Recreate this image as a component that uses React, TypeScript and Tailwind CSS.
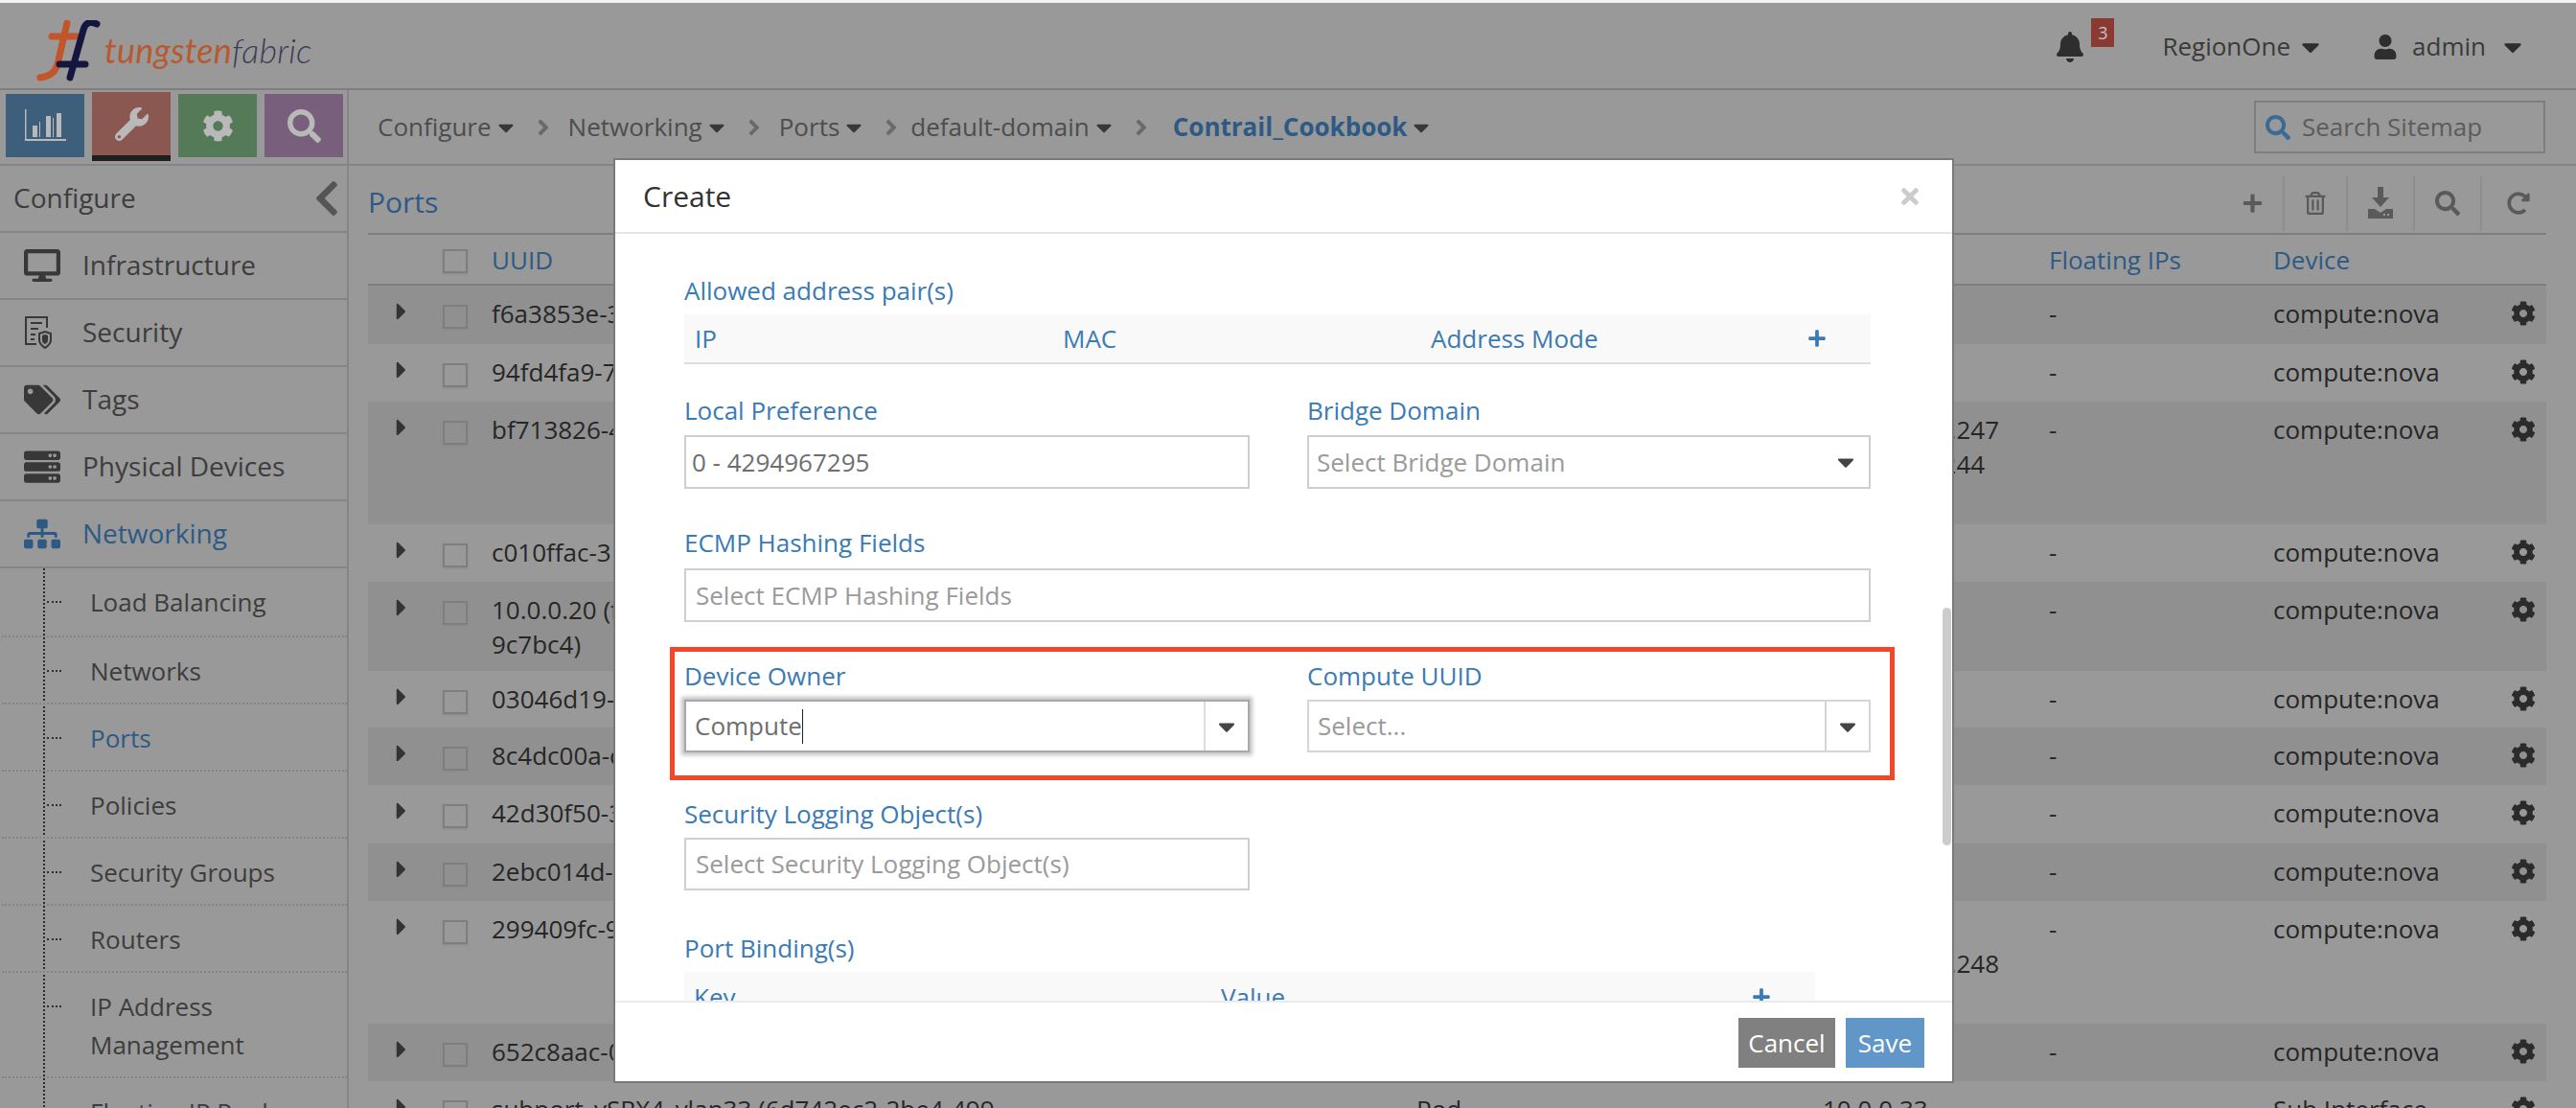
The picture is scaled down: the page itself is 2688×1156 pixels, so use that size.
import React from 'react';
import {
  FaAngleRight,
  FaBell,
  FaCaretDown,
  FaCaretRight,
  FaChevronLeft,
  FaCog,
  FaDesktop,
  FaPlus,
  FaRedoAlt,
  FaRegTrashAlt,
  FaSearch,
  FaServer,
  FaSitemap,
  FaTags,
  FaTimes,
  FaUser,
  FaWrench,
} from 'react-icons/fa';

const sans = "font-['Open_Sans',sans-serif]";

const rows = [
  { h: 'h-[61px]', id: ['f6a3853e-3c1a-4b2e-9d10-7e5f11a2'], ip: [''], dev: 'compute:nova' },
  { h: 'h-[60px]', id: ['94fd4fa9-7b20-4e31-8cc4-19ad02f7'], ip: [''], dev: 'compute:nova' },
  { h: 'h-[128px]', id: ['bf713826-4e0d-4a77-b1f2-3c90d6e1'], ip: ['192.168.10.247', '172.16.10.244'], dev: 'compute:nova' },
  { h: 'h-[60px]', id: ['c010ffac-31d4-48ab-a05e-62b7c0d3'], ip: [''], dev: 'compute:nova' },
  { h: 'h-[93px]', id: ['10.0.0.20 (f2a81c0e-5d3b-4f60-a7e1-', '9c7bc4)'], ip: [''], dev: 'compute:nova' },
  { h: 'h-[59px]', id: ['03046d19-2a6f-4c18-93de-50e1b7a4'], ip: [''], dev: 'compute:nova' },
  { h: 'h-[60px]', id: ['8c4dc00a-c71e-4d02-86fb-a13e9072'], ip: [''], dev: 'compute:nova' },
  { h: 'h-[61px]', id: ['42d30f50-3b8c-49e7-a214-d7f06c15'], ip: [''], dev: 'compute:nova' },
  { h: 'h-[60px]', id: ['2ebc014d-4f92-4b6a-8e37-01c5da98'], ip: [''], dev: 'compute:nova' },
  { h: 'h-[128px]', id: ['299409fc-9d15-4ea3-b7c0-84f2e613'], ip: ['', '192.168.20.248'], dev: 'compute:nova' },
  { h: 'h-[60px]', id: ['652c8aac-0e47-4c39-91ab-7d26f3b0'], ip: [''], dev: 'compute:nova' },
  { h: 'h-[60px]', id: ['subport_vSRX4_vlan33 (6d742ec2-2be4-499'], name: 'Pod', ip: ['10.0.0.33'], dev: 'Sub Interface' },
];

const subItems = [
  { label: ['Load Balancing'], h: 'h-[72px]' },
  { label: ['Networks'], h: 'h-[70px]' },
  { label: ['Ports'], h: 'h-[70px]', active: true },
  { label: ['Policies'], h: 'h-[70px]' },
  { label: ['Security Groups'], h: 'h-[70px]' },
  { label: ['Routers'], h: 'h-[70px]' },
  { label: ['IP Address', 'Management'], h: 'h-[110px]' },
  { label: ['Floating IP Pools'], h: 'h-[70px]' },
];

function ChartIcon() {
  return (
    <svg width="43" height="34" viewBox="0 0 43 34" fill="#b9b9b9">
      <path d="M0 0h1.500v31H43v2H0z" />
      <path d="M8 17h5v12H8zM15 13h1v16h-1zM22 7h5v22h-5zM29 9h1v20h-1zM33 4h5v25h-5z" />
    </svg>
  );
}

function SecurityIcon() {
  return (
    <svg width="30" height="36" viewBox="0 0 30 36" fill="none" stroke="#383838" strokeWidth="2">
      <path d="M24 13V2H2v28h11" />
      <path d="M7 8h12M7 14h8M7 20h5M7 25h4" />
      <path d="M16 19l6-2 6 2v7c0 4-3 6-6 8-3-2-6-4-6-8z" />
      <path d="M19 21l3-1 3 1v5c0 2-1.500 3-3 4-1.500-1-3-2-3-4z" fill="#383838" stroke="none" />
    </svg>
  );
}

function DownloadIcon() {
  return (
    <svg width="26" height="34" viewBox="0 0 26 34" fill="#5a5a5a">
      <path d="M10 0h6v11h6l-9 10-9-10h6z" />
      <path d="M0 23h7l6 4 6-4h7v10H0z" />
      <rect x="20" y="28" width="2" height="2" fill="#999" />
      <rect x="16" y="28" width="2" height="2" fill="#999" />
    </svg>
  );
}

function Logo() {
  return (
    <div className="flex items-center pl-[38px] pt-[10px]">
      <svg width="68" height="64" viewBox="38 12 68 64" fill="none" strokeLinecap="round">
        <path d="M70 15 L60 58 Q57 70 42 72" stroke="#c2552a" strokeWidth="7" />
        <path d="M54 29 H80" stroke="#c2552a" strokeWidth="7" />
        <path d="M101 16 Q90 11 87 22 L73 72" stroke="#15163f" strokeWidth="7" />
        <path d="M62 58 H89" stroke="#15163f" strokeWidth="7" />
      </svg>
      <span className="ml-[3px] -mt-[2px] font-['Lato',sans-serif] italic text-[36px] leading-none tracking-[0.2px]">
        <span className="text-[#b8592f]">tungsten</span>
        <span className="text-[#3a3e55] font-light">fabric</span>
      </span>
    </div>
  );
}

function Crumb({ label, strong, last, className }: { label: string; strong?: boolean; last?: boolean; className?: string }) {
  return (
    <div className={`flex items-center ${className ?? ''}`}>
      <span className={strong ? 'font-bold text-[#2d5a85]' : 'text-[#4d4d4d]'}>{label}</span>
      <FaCaretDown className="ml-[2px] text-[#383838]" size={26} />
      {!last && <FaAngleRight className="mx-[13px] text-[#6a6a6a]" size={26} />}
    </div>
  );
}

function Tab({ color, active, children }: { color: string; active?: boolean; children: React.ReactNode }) {
  return (
    <div className={active ? 'flex flex-col w-[82px] -mt-[2px]' : 'flex flex-col w-[82px]'}>
      <div className={`${color} h-[66px] flex items-center justify-center`}>{children}</div>
      {active && <div className="h-[6px] bg-[#1e1e1e]" />}
    </div>
  );
}

function SideItem({ icon, label, active }: { icon: React.ReactNode; label: string; active?: boolean }) {
  return (
    <div className="h-[70px] border-b-2 border-[#858585] flex items-center">
      <div className="w-[86px] pl-[25px] flex items-center">{icon}</div>
      <span className={`-mt-[2px] ${active ? 'text-[#2d5a85]' : 'text-[#3d3d3d]'}`}>{label}</span>
    </div>
  );
}

function Checkbox() {
  return <div className="w-[26px] h-[25px] border-2 border-[#7e7e7e] shadow-[0_1px_2px_#8a8a8a]" />;
}

function FieldLabel({ children }: { children: React.ReactNode }) {
  return <div className="text-[26px] leading-[36px] text-[#3a7ab5]">{children}</div>;
}

function TextBox({ text, dark, h }: { text: string; dark?: boolean; h: string }) {
  return (
    <div className={`${h} border-2 border-[#cfcfcf] flex items-center text-[26px] ${dark ? 'pl-[6px] text-[#6e6e6e]' : 'pl-[10px] text-[#9a9a9a]'}`}>
      {text}
    </div>
  );
}

export default function App() {
  return (
    <div className={`${sans} relative w-[2688px] h-[1156px] overflow-hidden bg-[#999999] border-t-[3px] border-[#f2f2f2]`}>
      {/* Top bar */}
      <div className="h-[91px] border-b-2 border-[#7e7e7e] flex items-center justify-between">
        <Logo />
        <div className="flex items-center mt-[2px] text-[26px] text-[#3a3a3a] pr-[51px]">
          <div className="relative mr-[80px]">
            <FaBell size={32} className="text-[#2e2e2e]" />
            <div className="absolute -top-[14px] left-[38px] w-[24px] h-[30px] bg-[#8a3a33] text-[#c4c4c4] text-[18px] leading-[30px] text-center">3</div>
          </div>
          <span>RegionOne</span>
          <FaCaretDown size={30} className="ml-[6px] mr-[50px] text-[#2e2e2e]" />
          <FaUser size={26} className="mr-[15px] text-[#2e2e2e]" />
          <span>admin</span>
          <FaCaretDown size={30} className="ml-[13px] text-[#2e2e2e]" />
        </div>
      </div>

      {/* Menu tabs and breadcrumb */}
      <div className="h-[79px] border-b-2 border-[#858585] flex">
        <div className="w-[364px] border-r-2 border-[#858585] flex items-start pt-[4px] pl-[6px] gap-x-[8px]">
          <Tab color="bg-[#3d5f7c]"><ChartIcon /></Tab>
          <Tab color="bg-[#8a5751]" active><FaWrench size={35} className="text-[#b9b9b9]" /></Tab>
          <Tab color="bg-[#557a57]"><FaCog size={33} className="text-[#b9b9b9]" /></Tab>
          <Tab color="bg-[#78607d]"><FaSearch size={35} className="text-[#b9b9b9]" /></Tab>
        </div>
        <div className="flex-1 flex items-center pl-[30px] pr-[32px] justify-between">
          <div className="flex items-center text-[26px]">
            <Crumb label="Configure" />
            <Crumb label="Networking" />
            <Crumb label="Ports" className="-mr-[6px]" />
            <Crumb label="default-domain" className="mr-[7px]" />
            <Crumb label="Contrail_Cookbook" strong last />
          </div>
          <div className="w-[304px] h-[55px] border-2 border-[#7e7e7e] flex items-center pl-[10px] text-[26px] text-[#5c5c5c]">
            <FaSearch size={26} className="text-[#3a6a96] mr-[12px]" />
            Search Sitemap
          </div>
        </div>
      </div>

      <div className="flex">
        {/* Sidebar */}
        <div className="w-[364px] h-[984px] border-r-2 border-[#858585] text-[28px]">
          <div className="h-[70px] border-b-2 border-[#858585] flex items-center justify-between pl-[14px] text-[#3d3d3d]">
            <span className="-mt-[2px]">Configure</span>
            <FaChevronLeft size={42} className="text-[#555555]" />
          </div>
          <SideItem icon={<FaDesktop size={38} className="text-[#383838]" />} label="Infrastructure" />
          <SideItem icon={<SecurityIcon />} label="Security" />
          <SideItem icon={<FaTags size={38} className="text-[#383838]" />} label="Tags" />
          <SideItem icon={<FaServer size={38} className="text-[#383838]" />} label="Physical Devices" />
          <SideItem icon={<FaSitemap size={38} className="text-[#2d5a85]" />} label="Networking" active />
          <div className="ml-[45px] border-l-2 border-dotted border-[#2e2e2e] text-[26px]">
            {subItems.map((item) => (
              <div key={item.label[0]} className={`${item.h} -ml-[45px] border-b-2 border-dotted border-[#858585] flex`}>
                <div className="w-[47px] shrink-0" />
                <div className="w-[15px] mt-[34px] h-0 border-t-2 border-dotted border-[#2e2e2e] shrink-0" />
                <div className={`ml-[30px] pt-[15px] leading-[40px] ${item.active ? 'text-[#2d5a85]' : 'text-[#3d3d3d]'}`}>
                  {item.label.map((l) => <div key={l}>{l}</div>)}
                </div>
              </div>
            ))}
          </div>
        </div>

        {/* Ports grid */}
        <div className="w-[2273px] ml-[20px]">
          <div className="h-[72px] border-b-2 border-[#7e7e7e] flex items-center justify-between">
            <span className="text-[30px] text-[#2d5a85] mt-[4px]">Ports</span>
            <div className="flex items-center h-[57px] -mb-[8px] pr-[17px] text-[#5a5a5a]">
              <div className="w-[44px] pr-[21px] h-full flex items-center border-r-2 border-[#8e8e8e]"><FaPlus size={22} /></div>
              <div className="w-[66px] h-full flex items-center justify-center border-r-2 border-[#8e8e8e]"><FaRegTrashAlt size={24} /></div>
              <div className="w-[70px] h-full flex items-center justify-center border-r-2 border-[#8e8e8e]"><DownloadIcon /></div>
              <div className="w-[70px] h-full flex items-center justify-center border-r-2 border-[#8e8e8e]"><FaSearch size={26} /></div>
              <div className="w-[50px] h-full flex items-center justify-end"><FaRedoAlt size={24} /></div>
            </div>
          </div>
          <div className="h-[53px] border-b-2 border-[#7e7e7e] grid grid-cols-[78px_51px_965px_424px_236px_234px_285px] items-center text-[26px] text-[#2d5a85]">
            <div />
            <div className="mt-[3px]"><Checkbox /></div>
            <div className="mt-[2px]">UUID</div>
            <div />
            <div />
            <div className="mt-[2px]">Floating IPs</div>
            <div className="mt-[2px]">Device</div>
          </div>
          {rows.map((row, i) => (
            <div
              key={row.id[0]}
              className={`${row.h} ${i % 2 === 0 ? 'bg-[#909090]' : ''} grid grid-cols-[78px_51px_965px_424px_236px_234px_248px_37px] text-[26px] leading-[36px] text-[#262626] pt-[11px]`}
            >
              <div className="pl-[21px] pt-[2px]"><FaCaretRight size={28} className="text-[#333333]" /></div>
              <div className="pt-[9px]"><Checkbox /></div>
              <div className="whitespace-nowrap">{row.id.map((l) => <div key={l}>{l}</div>)}</div>
              <div>{row.name}</div>
              <div>{row.ip.map((l, n) => <div key={n} className="h-[36px]">{l}</div>)}</div>
              <div>-</div>
              <div>{row.dev}</div>
              <div className="pt-[5px]"><FaCog size={26} className="text-[#2b2b2b]" /></div>
            </div>
          ))}
        </div>
      </div>

      {/* Create dialog */}
      <div className="absolute left-[640px] top-[162px] w-[1399px] h-[965px] bg-white border-2 border-[#7a7a7a] flex flex-col">
        <div className="h-[77px] shrink-0 border-b-2 border-[#e5e5e5] flex items-center justify-between pl-[29px] pr-[31px]">
          <span className="text-[30px] text-[#333333]">Create</span>
          <FaTimes size={26} className="text-[#cccccc]" />
        </div>
        <div className="relative flex-1 overflow-hidden pl-[72px] pt-[41px]">
          <div className="w-[1238px]">
            <FieldLabel>Allowed address pair(s)</FieldLabel>
            <div className="mt-[7px] h-[52px] bg-[#f9f9f9] border-b-2 border-[#dddddd] grid grid-cols-[384px_384px_393px_1fr] items-center pl-[11px] text-[26px] text-[#3a7ab5]">
              <span>IP</span>
              <span>MAC</span>
              <span>Address Mode</span>
              <FaPlus size={20} />
            </div>
            <div className="mt-[30px] grid grid-cols-[590px_588px] gap-x-[60px]">
              <div>
                <FieldLabel>Local Preference</FieldLabel>
                <div className="mt-[8px]"><TextBox text="0 - 4294967295" h="h-[56px]" dark /></div>
              </div>
              <div>
                <FieldLabel>Bridge Domain</FieldLabel>
                <div className="mt-[8px] h-[56px] border-2 border-[#cfcfcf] flex items-center justify-between pl-[8px] pr-[10px] text-[26px] text-[#9a9a9a]">
                  Select Bridge Domain
                  <FaCaretDown size={28} className="text-[#444444]" />
                </div>
              </div>
            </div>
            <div className="mt-[38px]">
              <FieldLabel>ECMP Hashing Fields</FieldLabel>
              <div className="mt-[9px]"><TextBox text="Select ECMP Hashing Fields" h="h-[56px]" /></div>
            </div>
            <div className="mt-[38px] grid grid-cols-[590px_588px] gap-x-[60px]">
              <div>
                <FieldLabel>Device Owner</FieldLabel>
                <div className="mt-[7px] h-[55px] flex border-2 border-[#a8a8a8] shadow-[0_0_4px_3px_#c4c4c4]">
                  <div className="flex-1 flex items-center pl-[9px] text-[26px] text-[#6e6e6e]">
                    Compute<span className="w-px h-[36px] bg-[#222222]" />
                  </div>
                  <div className="w-[46px] border-l-2 border-[#dddddd] flex items-center justify-center"><FaCaretDown size={28} className="text-[#444444]" /></div>
                </div>
              </div>
              <div>
                <FieldLabel>Compute UUID</FieldLabel>
                <div className="mt-[7px] h-[55px] flex border-2 border-[#d5d5d5]">
                  <div className="flex-1 flex items-center pl-[9px] text-[26px] text-[#9a9a9a]">Select...</div>
                  <div className="w-[46px] border-l-2 border-[#d5d5d5] flex items-center justify-center"><FaCaretDown size={28} className="text-[#444444]" /></div>
                </div>
              </div>
            </div>
            <div className="mt-[46px] w-[590px]">
              <FieldLabel>Security Logging Object(s)</FieldLabel>
              <div className="mt-[7px]"><TextBox text="Select Security Logging Object(s)" h="h-[55px]" /></div>
            </div>
            <div className="mt-[42px]">
              <FieldLabel>Port Binding(s)</FieldLabel>
              <div className="mt-[7px] w-[1180px] h-[52px] bg-[#f9f9f9] grid grid-cols-[550px_554px_1fr] items-center pl-[10px] text-[26px] text-[#3a7ab5]">
                <span>Key</span>
                <span>Value</span>
                <FaPlus size={20} />
              </div>
            </div>
          </div>
          <div className="absolute right-[1px] top-[390px] w-[9px] h-[248px] rounded-full bg-[#cccccc]" />
        </div>
        <div className="h-[84px] shrink-0 border-t-2 border-[#e8ecef] flex items-start justify-end gap-x-[11px] pt-[16px] pr-[29px] text-[26px] text-white">
          <div className="w-[101px] h-[52px] bg-[#808080] flex items-center justify-center">Cancel</div>
          <div className="w-[82px] h-[52px] bg-[#6096c8] flex items-center justify-center">Save</div>
        </div>
      </div>

      {/* Annotation box */}
      <div className="absolute left-[699px] top-[672px] w-[1278px] h-[139px] border-[5px] border-[#f4472a]" />
    </div>
  );
}
